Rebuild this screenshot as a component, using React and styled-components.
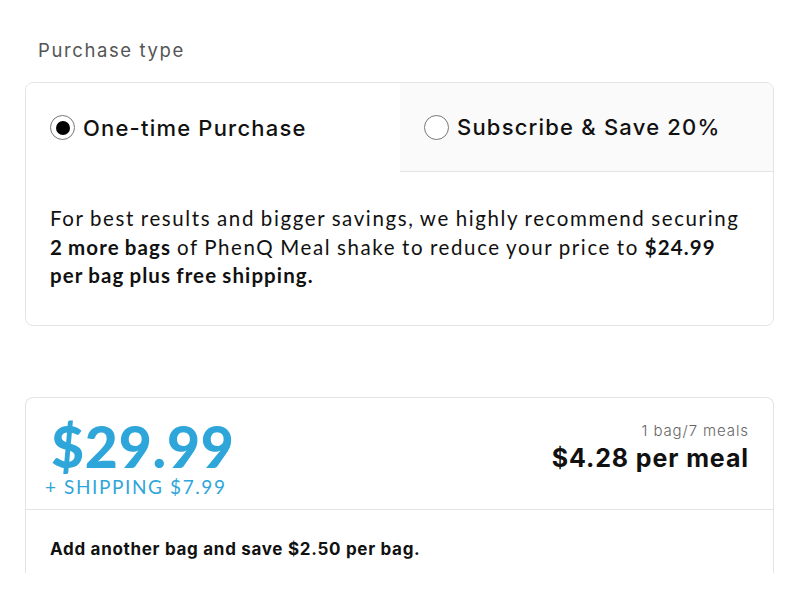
import React from "react";
import styled, { createGlobalStyle } from "styled-components";

const Global = createGlobalStyle`
  html, body { margin: 0; padding: 0; background: #fff; }
  body { font-family: Lato, "Noto Sans", sans-serif; color: #111; }
`;

const Page = styled.div`
  padding: 36px 26px 0 25px;
  display: flex;
  flex-direction: column;
`;

const SectionLabel = styled.div`
  font-family: Inter, sans-serif;
  font-size: 18.5px;
  letter-spacing: 1.6px;
  color: #555;
  padding-left: 13px;
  line-height: 28px;
  margin-bottom: 18px;
`;

const Card = styled.div`
  border: 1px solid #e4e4e4;
  border-radius: 8px;
  overflow: hidden;
  background: #fff;
  ${(p) => p.$open && `
    border-bottom: none;
    border-radius: 8px 8px 0 0;
  `}
`;

const Tabs = styled.div`
  display: grid;
  grid-template-columns: 374px 1fr;
  height: 89px;
`;

const Tab = styled.div`
  display: flex;
  align-items: center;
  gap: 8px;
  padding-left: 24px;
  background: ${(p) => (p.$active ? "#fff" : "#fafafa")};
  border-bottom: ${(p) => (p.$active ? "none" : "1px solid #e4e4e4")};
  font-family: Inter, sans-serif;
  font-weight: 500;
  font-size: 22px;
  letter-spacing: 1.2px;
  color: #111;
`;

const Radio = styled.span`
  width: 25px;
  height: 25px;
  border-radius: 50%;
  border: 1px solid #777;
  box-sizing: border-box;
  display: flex;
  align-items: center;
  justify-content: center;
  background: #fff;
  flex-shrink: 0;
  &::after {
    content: "";
    width: 14px;
    height: 14px;
    border-radius: 50%;
    background: #000;
    display: ${(p) => (p.$checked ? "block" : "none")};
  }
`;

const Note = styled.p`
  margin: 0;
  padding: 32px 20px 35px 24px;
  font-family: Lato, sans-serif;
  font-size: 20.5px;
  line-height: 28.5px;
  color: #111;
  letter-spacing: 1.6px;
  word-spacing: -1px;
  b { font-weight: 700; letter-spacing: 1.1px; }
`;

const Spacer = styled.div`
  height: 71px;
`;

const PriceRow = styled.div`
  display: flex;
  justify-content: space-between;
  height: 111px;
  border-bottom: 1px solid #e4e4e4;
  padding: 0 24px 0 19px;
`;

const PriceBlock = styled.div`
  display: flex;
  flex-direction: column;
  padding-top: 21px;
`;

const Price = styled.div`
  font-family: Lato, sans-serif;
  font-weight: 900;
  font-size: 57px;
  line-height: 54px;
  color: #2ea6da;
  padding-left: 6px;
  letter-spacing: 0.8px;
`;

const Shipping = styled.div`
  font-family: Lato, sans-serif;
  font-size: 19px;
  line-height: 20px;
  margin-top: 4px;
  color: #2ea6da;
  letter-spacing: 1.6px;
`;

const MealBlock = styled.div`
  display: flex;
  flex-direction: column;
  align-items: flex-end;
  padding-top: 24px;
`;

const MealCount = styled.div`
  font-family: Inter, sans-serif;
  font-weight: 300;
  font-size: 15px;
  line-height: 18px;
  color: #666;
  letter-spacing: 0.9px;
`;

const MealPrice = styled.div`
  font-family: Inter, sans-serif;
  font-weight: 700;
  font-size: 25px;
  line-height: 36px;
  color: #111;
  letter-spacing: 0.9px;
`;

const Upsell = styled.div`
  height: 63px;
  padding: 27px 24px 0;
  box-sizing: border-box;
  font-family: Inter, sans-serif;
  font-weight: 700;
  font-size: 17px;
  line-height: 24px;
  letter-spacing: 0.7px;
  color: #111;
`;

export default function App() {
  return (
    <>
      <Global />
      <Page>
        <SectionLabel>Purchase type</SectionLabel>
        <Card>
          <Tabs>
            <Tab $active>
              <Radio $checked />
              One-time Purchase
            </Tab>
            <Tab>
              <Radio />
              Subscribe &amp; Save 20%
            </Tab>
          </Tabs>
          <Note>
            For best results and bigger savings, we highly recommend securing
            <br />
            <b>2 more bags</b> of PhenQ Meal shake to reduce your price to{" "}
            <b>$24.99</b>
            <br />
            <b>per bag plus free shipping.</b>
          </Note>
        </Card>
        <Spacer />
        <Card $open>
          <PriceRow>
            <PriceBlock>
              <Price>$29.99</Price>
              <Shipping>+ SHIPPING $7.99</Shipping>
            </PriceBlock>
            <MealBlock>
              <MealCount>1 bag/7 meals</MealCount>
              <MealPrice>$4.28 per meal</MealPrice>
            </MealBlock>
          </PriceRow>
          <Upsell>Add another bag and save $2.50 per bag.</Upsell>
        </Card>
      </Page>
    </>
  );
}
